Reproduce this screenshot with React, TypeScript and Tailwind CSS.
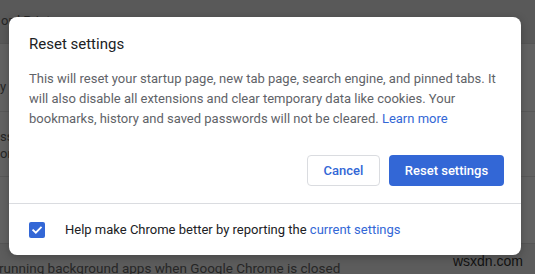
const ResetDialog = () => {
  return (
    <div className="absolute left-[9px] top-[17px] w-[512px] rounded-[8px] bg-white shadow-[0_2px_8px_rgba(0,0,0,0.25)]">
      <section className="px-5 pt-[17px]">
        <h1 className="text-[15px] leading-5 text-[#202124]">Reset settings</h1>
        <p className="mt-[15px] text-[13px] leading-5 text-[#5f6368]">
          This will reset your startup page, new tab page, search engine, and pinned tabs. It will also
          disable all extensions and clear temporary data like cookies. Your bookmarks, history and saved
          passwords will not be cleared. <a className="text-[#3367d6]">Learn more</a>
        </p>
      </section>
      <section className="mt-[26px] flex justify-end gap-[9px] pr-[17px] pb-[17px]">
        <button className="h-[31px] w-[73px] rounded-[4px] border border-[#dadce0] bg-white text-[13px] font-medium text-[#3367d6]">
          Cancel
        </button>
        <button className="h-[31px] w-[115px] rounded-[4px] bg-[#3367d6] text-[13px] font-medium text-white">
          Reset settings
        </button>
      </section>
      <section className="flex h-[52px] items-center border-t border-[#dadce0] px-5">
        <span className="flex h-[16px] w-[16px] items-center justify-center rounded-[2px] bg-[#3367d6]">
          <svg width="12" height="12" viewBox="0 0 12 12" fill="none">
            <path d="M2.2 6.2 4.8 8.7 9.9 3.4" stroke="white" strokeWidth="1.8" strokeLinecap="square" />
          </svg>
        </span>
        <p className="ml-[20px] text-[13px] leading-5 text-[#202124]">
          Help make Chrome better by reporting the <a className="text-[#3367d6]">current settings</a>
        </p>
      </section>
    </div>
  );
};

const App = () => {
  return (
    <div
      className="relative h-[274px] w-[535px] overflow-hidden bg-[#5f605f] text-[13px] text-[#262626]"
      style={{ fontFamily: 'Roboto, "Liberation Sans", sans-serif' }}
    >
      <div className="flex h-[43px] items-start bg-[#595959] pt-[11px] pl-[1px]">
        <p className="leading-5">ord Printers</p>
      </div>
      <div className="flex h-[68px] items-center border-t border-[#555] bg-[#626262] pl-0 pt-[18px]">
        <p className="leading-5">y settings</p>
      </div>
      <div className="flex h-[65px] flex-col border-t border-[#585858] bg-[#626262] pt-[16px] pl-0">
        <p className="leading-[17px]">ss settings</p>
        <p className="leading-[17px]">or content</p>
      </div>
      <div className="h-[67px] border-t border-[#585858] bg-[#626262]" />
      <div className="h-[31px] border-t border-[#555] bg-[#5c5c5c] pt-[14px] pl-0">
        <p className="-ml-[1px] text-[13.5px] leading-5">running background apps when Google Chrome is closed</p>
      </div>
      <ResetDialog />
      <span
        className="absolute right-[12px] bottom-[2px] text-[14px] text-[#111]"
        style={{ fontFamily: '"Liberation Sans", sans-serif' }}
      >
        wsxdn.com
      </span>
    </div>
  );
};

export default App;
